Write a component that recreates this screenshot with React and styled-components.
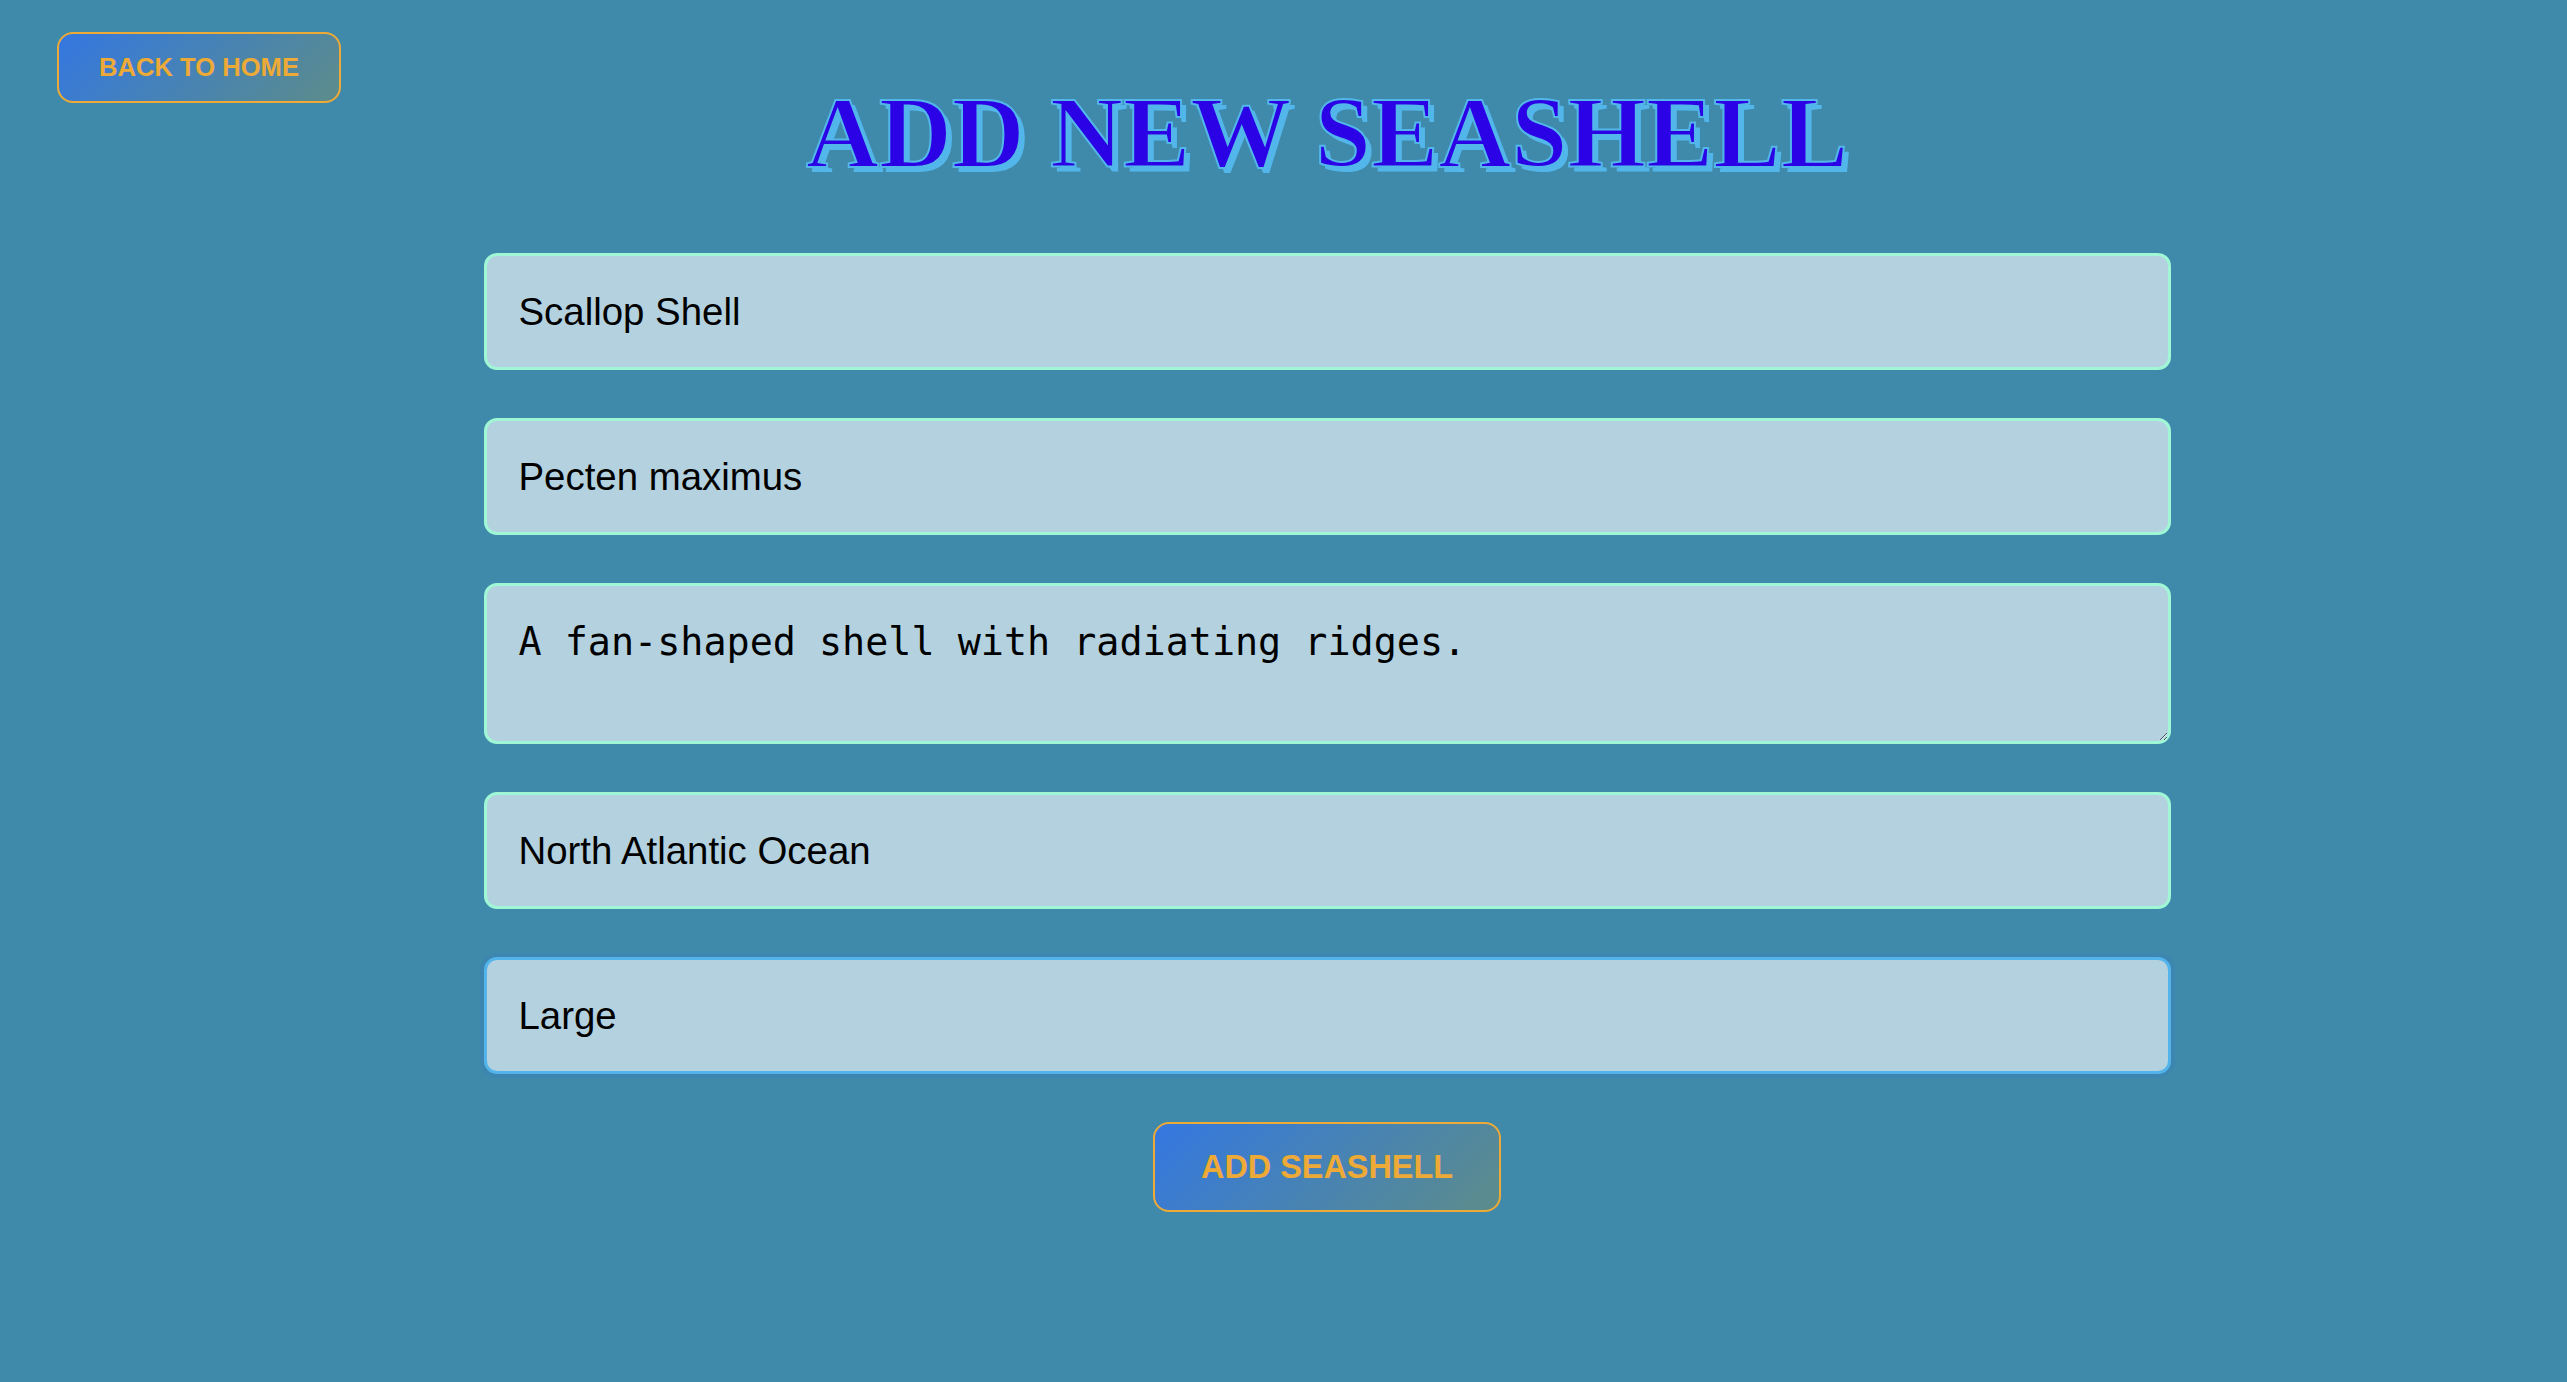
import styled, { createGlobalStyle } from 'styled-components'

const GlobalStyle = createGlobalStyle`
  html, body {
    margin: 0;
    padding: 0;
    background: #3f8aab;
  }
  * { box-sizing: border-box; }
`

const fields = [
  { name: 'name', value: 'Scallop Shell' },
  { name: 'species', value: 'Pecten maximus' },
  { name: 'description', value: 'A fan-shaped shell with radiating ridges.', multiline: true },
  { name: 'location', value: 'North Atlantic Ocean' },
  { name: 'size', value: 'Large ', active: true },
]

function App() {
  return (
    <>
      <GlobalStyle />
      <Page>
        <TopBar>
          <PillButton $small type="button">BACK TO HOME</PillButton>
          <Title>ADD NEW SEASHELL</Title>
        </TopBar>

        <Form onSubmit={(e) => e.preventDefault()}>
          {fields.map((f) =>
            f.multiline ? (
              <TextArea key={f.name} name={f.name} rows={2} defaultValue={f.value} />
            ) : (
              <Input
                key={f.name}
                name={f.name}
                defaultValue={f.value}
                $active={f.active}
                autoFocus={f.active}
              />
            )
          )}
          <PillButton type="submit">ADD SEASHELL</PillButton>
        </Form>
      </Page>
    </>
  )
}

const Page = styled.div`
  min-height: 100vh;
  padding: 32px 0 60px 87px;
  background: #3f8aab;
  font-family: "Liberation Sans", Arial, sans-serif;
`

const TopBar = styled.header`
  display: grid;
  grid-template-areas: "top";
  margin-left: -30px;
  padding-left: 30px;

  & > * {
    grid-area: top;
  }
`

const Title = styled.h1`
  justify-self: center;
  margin: 45px 0 0;
  font-family: "Liberation Serif", "Times New Roman", serif;
  font-weight: 700;
  font-size: 101px;
  line-height: 112px;
  color: #2b02e6;
  -webkit-text-stroke: 2px #52b6ea;
  text-shadow: 5px 5px 0 #52b6ea;
`

const PillButton = styled.button`
  justify-self: ${(p) => (p.$small ? 'start' : 'center')};
  align-self: ${(p) => (p.$small ? 'start' : 'center')};
  margin-left: ${(p) => (p.$small ? '-30px' : '0')};
  padding: ${(p) => (p.$small ? '19px 40px' : '24.5px 46px')};
  font-family: "Liberation Sans", Arial, sans-serif;
  font-weight: 700;
  font-size: ${(p) => (p.$small ? '25.6px' : '32.4px')};
  color: #eeaa36;
  border: 2.5px solid #eeaa36;
  border-radius: 16px;
  background: linear-gradient(135deg, #3477e2 0%, #4783b4 50%, #5c8c8a 100%);
  cursor: pointer;
`

const Form = styled.form`
  width: 1687px;
  margin: 64px auto 0;
  display: flex;
  flex-direction: column;
  gap: 48px;
`

const fieldBase = `
  width: 100%;
  padding: 33.5px 32px;
  border: 3.2px solid #a0f7d6;
  border-radius: 13px;
  background: #b3d1df;
  color: #000;
  font-size: 38.4px;
  outline: none;
  caret-color: #000;
`

const Input = styled.input`
  ${fieldBase}
  font-family: "Liberation Sans", Arial, sans-serif;
  ${(p) =>
    p.$active &&
    `
    border-color: #52b4ea;
    box-shadow: 0 0 0 4px rgba(60, 134, 176, 1);
  `}
`

const TextArea = styled.textarea`
  ${fieldBase}
  display: block;
  padding: 32.5px 32px;
  font-family: "DejaVu Sans Mono", "Liberation Mono", monospace;
  line-height: normal;
  resize: vertical;
`

export default App
